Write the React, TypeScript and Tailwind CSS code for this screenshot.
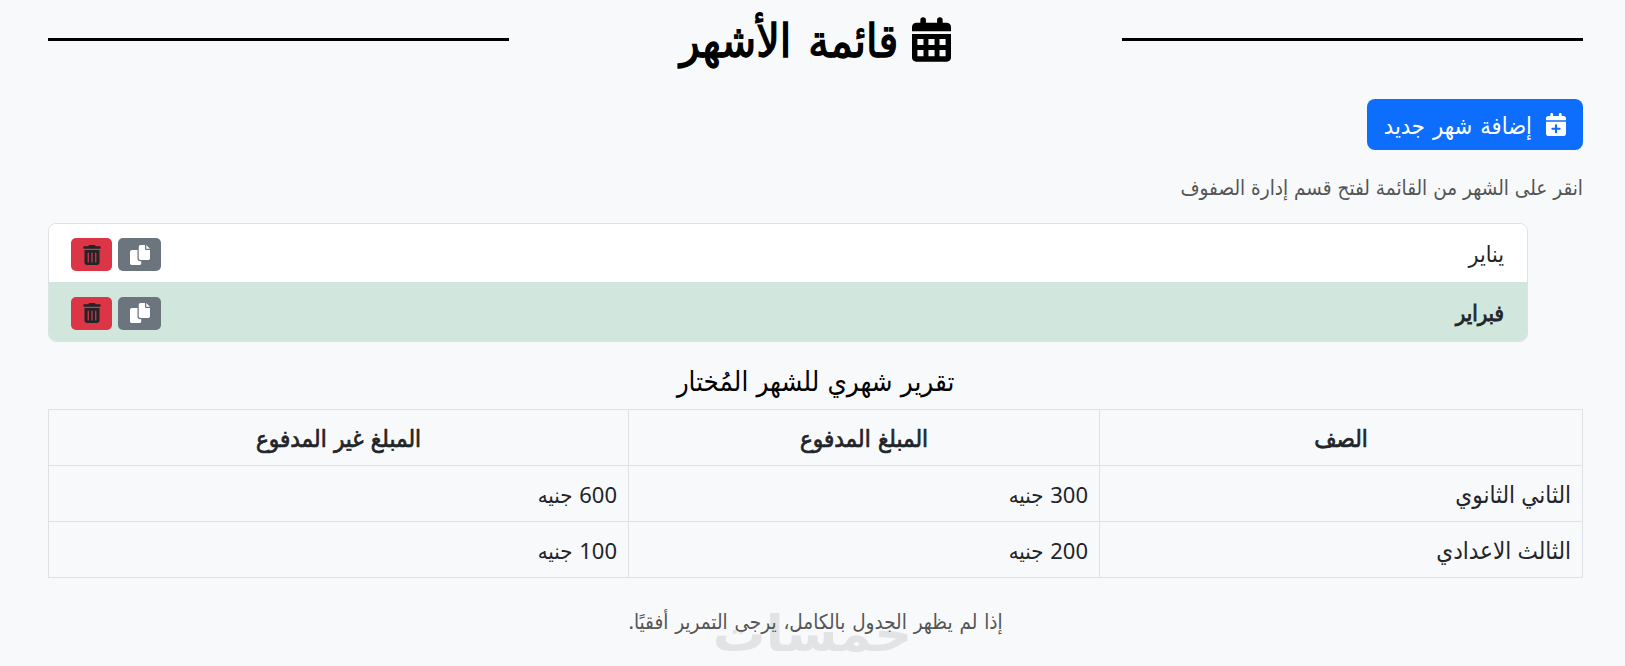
import { FaCalendarPlus, FaTrashCan } from "react-icons/fa6";

type Month = {
  id: number;
  name: string;
  active?: boolean;
};

type ReportRow = {
  id: number;
  grade: string;
  paid: number;
  unpaid: number;
};

const months: Month[] = [
  { id: 1, name: "يناير" },
  { id: 2, name: "فبراير", active: true },
];

const report: ReportRow[] = [
  { id: 1, grade: "الثاني الثانوي", paid: 300, unpaid: 600 },
  { id: 2, grade: "الثالث الاعدادي", paid: 200, unpaid: 100 },
];

function CalendarIcon() {
  return (
    <svg viewBox="0 0 448 512" className="w-[39px] h-[45px]" fill="currentColor">
      <path
        fillRule="evenodd"
        d="M96 32a32 32 0 0 1 64 0v32h128V32a32 32 0 0 1 64 0v32h48c26.5 0 48 21.5 48 48v48H0v-48c0-26.5 21.5-48 48-48h48zM0 192h448v272c0 26.500-21.500 48-48 48H48c-26.500 0-48-21.500-48-48zM62 250v70h70v-70zM189 250v70h70v-70zM316 250v70h70v-70zM62 378v70h70v-70zM189 378v70h70v-70zM316 378v70h70v-70z"
      />
    </svg>
  );
}

function CopyIcon() {
  return (
    <svg viewBox="0 0 512 512" className="w-5 h-5" fill="currentColor">
      <path d="M384 96V0H272c-26.510 0-48 21.490-48 48v288c0 26.510 21.490 48 48 48h192c26.510 0 48-21.490 48-48V128h-95.100C398.400 128 384 113.600 384 96zM416 0v96h96zM192 352V128H48c-26.510 0-48 21.490-48 48v288c0 26.510 21.490 48 48 48h192c26.510 0 48-21.490 48-48v-48h-32c-35.300 0-64-28.700-64-64z" />
    </svg>
  );
}

function MonthItem({ month }: { month: Month }) {
  return (
    <li
      className={
        month.active
          ? "flex items-center justify-between h-[59px] pr-[23px] pl-[22px] bg-[#d1e7dd] text-[22px] [-webkit-text-stroke:0.8px]"
          : "flex items-center justify-between h-[58px] pr-[23px] pl-[22px] bg-white"
      }
    >
      <span>{month.name}</span>
      <div className="flex gap-1.5 pt-[3px]">
        <button className="flex items-center justify-center w-[43px] h-[33px] rounded-[5px] bg-[#6c757d] text-white">
          <CopyIcon />
        </button>
        <button className="flex items-center justify-center w-[41px] h-[33px] rounded-[5px] bg-[#dc3545] text-[#212529]">
          <FaTrashCan size={20} />
        </button>
      </div>
    </li>
  );
}

export default function App() {
  return (
    <div
      dir="rtl"
      className="h-[666px] overflow-hidden bg-[#f8f9fb] pr-[42px] pl-12 pt-3 font-['Noto_Sans','DejaVu_Sans_Condensed','DejaVu_Sans',sans-serif] text-[23px] leading-[34px] text-[#212529]"
    >
      <header className="flex items-center justify-between h-[54px] text-black">
        <span className="w-[461px] h-[3px] bg-black" />
        <h1 className="flex items-center gap-3.5 text-[46px] leading-[54px] whitespace-nowrap [word-spacing:5px] [-webkit-text-stroke:1.3px]">
          <CalendarIcon />
          قائمة الأشهر
        </h1>
        <span className="w-[461px] h-[3px] bg-black" />
      </header>

      <button className="flex items-center gap-3.5 h-[51px] px-[17px] mt-[33px] rounded-lg bg-[#0d6efd] text-[23.5px] [word-spacing:2px] text-white whitespace-nowrap">
        <FaCalendarPlus size={23} className="w-5" />
        إضافة شهر جديد
      </button>

      <p className="mt-5 text-[20.5px] [word-spacing:0.6px] text-[#555]">
        انقر على الشهر من القائمة لفتح قسم إدارة الصفوف
      </p>

      <ul className="mt-[19px] mr-[55px] rounded-lg border border-[#dee2e6] overflow-hidden">
        {months.map((month) => (
          <MonthItem key={month.id} month={month} />
        ))}
      </ul>

      <h2 className="mt-[22px] text-center text-[27.5px] leading-[34px] [word-spacing:1px] text-black">
        تقرير شهري للشهر المُختار
      </h2>

      <table className="w-full mt-[11px] table-fixed border-collapse">
        <thead>
          <tr className="h-14 text-[24px] [word-spacing:1px]">
            <th className="w-[483px] border border-[#dee2e6] font-normal [-webkit-text-stroke:0.7px]">
              الصف
            </th>
            <th className="w-[471px] border border-[#dee2e6] font-normal [-webkit-text-stroke:0.7px]">
              المبلغ المدفوع
            </th>
            <th className="border border-[#dee2e6] font-normal [-webkit-text-stroke:0.7px]">
              المبلغ غير المدفوع
            </th>
          </tr>
        </thead>
        <tbody>
          {report.map((row) => (
            <tr key={row.id} className="h-14">
              <td className="px-[11px] border border-[#dee2e6] text-[24px]">{row.grade}</td>
              <td className="px-[11px] border border-[#dee2e6] text-[22px] [word-spacing:1px]">
                {row.paid} جنيه
              </td>
              <td className="px-[11px] border border-[#dee2e6] text-[22px] [word-spacing:1px]">
                {row.unpaid} جنيه
              </td>
            </tr>
          ))}
        </tbody>
      </table>

      <footer className="relative mt-[26px] text-center text-[20.5px] [word-spacing:1.5px] text-[#555]">
        <span className="absolute top-[5px] left-[667px] w-[195px] text-center text-[50px] leading-[46px] font-bold text-[#e1e3e5] scale-x-117">
          خمسات
        </span>
        <p className="relative">إذا لم يظهر الجدول بالكامل، يرجى التمرير أفقيًا.</p>
      </footer>
    </div>
  );
}
